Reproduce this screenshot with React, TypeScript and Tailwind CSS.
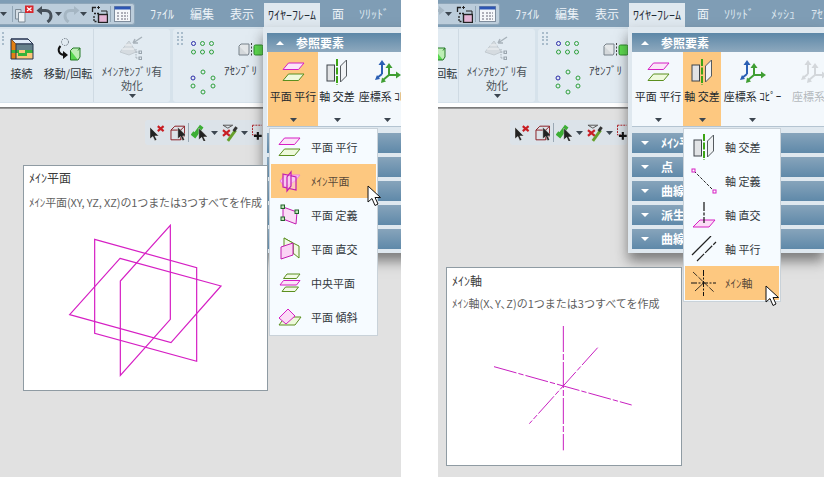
import type { ReactNode } from "react";

const pink = "#d61fc4";
const green = "#5b8f1f";

function ArrowDown({ color = "#3c4650" }: { color?: string }) {
  return (
    <svg width="7" height="4" viewBox="0 0 7 4">
      <path d="M0 0H7L3.5 4Z" fill={color} />
    </svg>
  );
}

function CopyIcon() {
  return (
    <svg width="19" height="18" viewBox="0 0 19 18">
      <path d="M0.5 4.5H6V14H0.5Z" fill="#d6dee5" stroke="#7d8b96" />
      <path d="M3.5 7.5H10V17H3.5Z" fill="#eef2f5" stroke="#7d8b96" />
      <rect x="10" y="0.5" width="8.5" height="7.5" fill="#d8262c" />
      <path d="M12 2.5L16.5 6M16.5 2.5L12 6" stroke="#fff" strokeWidth="1.3" />
    </svg>
  );
}

function UndoIcon({ color }: { color: string }) {
  return (
    <svg width="17" height="17" viewBox="0 0 17 17">
      <path d="M4 4.5H9.5C13 4.5 15 7 15 10C15 12.5 13.5 14.5 11.5 16" fill="none" stroke={color} strokeWidth="3" />
      <path d="M6 0V9L0.5 4.5Z" fill={color} />
    </svg>
  );
}

function TreeToolIcon() {
  return (
    <svg width="17" height="17" viewBox="0 0 17 17">
      <path d="M5 1.5H1.5V6" fill="none" stroke="#222" strokeWidth="1.3" />
      <path d="M3 7.5H8M3 10V15.5H6" fill="none" stroke="#222" strokeWidth="1.3" strokeDasharray="2 1" />
      <path d="M9 1.5H6.5L8 0M6.5 1.5L8 3" fill="none" stroke="#222" />
      <rect x="7.5" y="8.5" width="9" height="8" fill="#e4b4d4" stroke="#222" strokeWidth="1.4" />
      <path d="M10 5H16V8" fill="none" stroke="#222" />
    </svg>
  );
}

function TableIcon() {
  return (
    <svg width="17" height="16" viewBox="0 0 17 16">
      <rect x="0.5" y="0.5" width="16" height="15" fill="#f5f7fa" stroke="#7e8c9c" />
      <rect x="0.5" y="0.5" width="16" height="3" fill="#2d56b4" />
      <path d="M3 7H5M7 7H14M3 10H5M7 10H14M3 13H5M7 13H14" stroke="#667" strokeDasharray="2 1" />
    </svg>
  );
}

function ConnectIcon() {
  return (
    <svg width="24" height="22" viewBox="0 0 24 22">
      <path d="M1 1H18L23 6V21H1Z" fill="#fac677" />
      <path d="M1 1H18L23 6H6Z" fill="#dfe9f7" stroke="#1e2c50" />
      <path d="M1 1L6 6V21H1Z" fill="#e37f12" />
      <path d="M6 6H23V12H6Z" fill="#66808c" />
      <path d="M1 12H9V15H15V12H23L23 15H17V18H8V15H1Z" fill="#35b33a" />
      <path d="M1 1H18L23 6V21H1ZM6 6V21M6 6H23" fill="none" stroke="#26344e" />
    </svg>
  );
}

function MoveRotateIcon() {
  return (
    <svg width="26" height="23" viewBox="0 0 26 23">
      <circle cx="10" cy="4" r="3.5" fill="none" stroke="#6c7680" strokeDasharray="1.5 1" />
      <path d="M5.5 8C2.5 11 3 16 9 17" fill="none" stroke="#111" strokeWidth="2" />
      <path d="M8 13V21L13 17Z" fill="#111" />
      <path d="M15.5 12.5H23V22H15.5Z" fill="#58d84f" stroke="#257a26" />
      <path d="M15.5 12.5L18 10H25V19L23 22M23 12.5L25 10" fill="#bdeeb5" stroke="#257a26" />
    </svg>
  );
}

function AssemblyDisabledIcon() {
  return (
    <svg width="26" height="26" viewBox="0 0 26 26">
      <path d="M1 16L10 5L17 16L10 19Z" fill="#d5dbe0" stroke="#c3cbd1" />
      <path d="M3 13H15M6 9H13" stroke="#f2f4f6" />
      <path d="M14 7L23 1M14 7L19 7M14 7L16 3" fill="none" stroke="#a8b2ba" strokeWidth="1.4" />
      <path d="M17 13V22M17 16H21M17 22H21" fill="none" stroke="#a8b2ba" strokeDasharray="1.5 1" />
      <rect x="20" y="15" width="2.5" height="2.5" fill="none" stroke="#9aa5ae" />
      <rect x="20" y="21" width="2.5" height="2.5" fill="none" stroke="#9aa5ae" />
    </svg>
  );
}

function PointGridIcon() {
  const cols = [2.5, 11.5, 20.5];
  return (
    <svg width="24" height="14" viewBox="0 0 24 14">
      {cols.map((x, i) => (
        <circle key={x} cx={x} cy="2.5" r="2" fill="none" stroke={i === 0 ? "#2b2ba8" : "#2fa03c"} />
      ))}
      {cols.map((x) => (
        <circle key={x} cx={x} cy="11" r="2" fill="none" stroke="#2fa03c" />
      ))}
    </svg>
  );
}

function PointRingIcon() {
  return (
    <svg width="26" height="26" viewBox="0 0 26 26" fill="none" stroke="#2fa03c">
      <circle cx="13" cy="3" r="2" />
      <circle cx="23" cy="9" r="2" />
      <circle cx="23" cy="17" r="2" />
      <circle cx="13" cy="23" r="2" />
      <circle cx="3" cy="17" r="2" />
      <circle cx="3" cy="9" r="2" stroke="#2b2ba8" />
    </svg>
  );
}

function AssemblyCutIcon() {
  return (
    <svg width="26" height="14" viewBox="0 0 26 14">
      <path d="M1 3H10V12H1Z" fill="#d4d8db" stroke="#77818a" />
      <path d="M1 3L3 1H11V10L10 12" fill="#e4e7e9" stroke="#77818a" />
      <path d="M13.5 0V14" stroke="#444" strokeDasharray="2 1.5" />
      <rect x="16" y="2" width="9" height="10" rx="1.5" fill="#5cdc4e" stroke="#2d8a2a" />
    </svg>
  );
}

function PlaneParallelIcon() {
  return (
    <svg width="23" height="20" viewBox="0 0 23 20">
      <path d="M1 7.5L6.5 1H22L16.5 7.5Z" fill="#fbe4f8" stroke={pink} />
      <path d="M1 18.5L6.5 12H22L16.5 18.5Z" fill="#eef9dc" stroke={green} />
    </svg>
  );
}

function AxisCrossIcon() {
  return (
    <svg width="22" height="26" viewBox="0 0 22 26">
      <rect x="1" y="6" width="7.5" height="16" fill="#e1e3e5" stroke="#3e444a" />
      <path d="M14.5 7L20.5 1V17L14.5 23Z" fill="#f0f3f5" stroke="#555b60" />
      <path d="M11 0V26" stroke="#3da414" strokeWidth="2" strokeDasharray="7 1.5" />
    </svg>
  );
}

function CoordIcon({ disabled = false }: { disabled?: boolean }) {
  const blue = disabled ? "#d3d7db" : "#2a5fb4";
  const grn = disabled ? "#d3d7db" : "#3f9e32";
  return (
    <svg width="26" height="24" viewBox="0 0 26 24" fill="none" strokeWidth="2">
      <path d="M7 14V3" stroke={blue} />
      <path d="M7 0L3.5 5H10.5Z" fill={blue} />
      <path d="M7 14L2 18" stroke={blue} />
      <path d="M0 20L2 15L5 19Z" fill={blue} />
      <path d="M14 5V15" stroke={grn} />
      <path d="M14 3L10.5 8H17.5Z" fill={grn} />
      <path d="M14 15H22" stroke={grn} />
      <path d="M26 15L21 11.5V18.5Z" fill={grn} />
      <path d="M14 15L8 20" stroke={grn} />
      <path d="M6 23L7 17.5L11 21.5Z" fill={grn} />
    </svg>
  );
}

function MainPlaneIcon() {
  return (
    <svg width="22" height="24" viewBox="0 0 22 24" fill="#f9d0f2" stroke="#c21bb0">
      <path d="M1 12L6 6H21L16 12L6 18Z" fill="#f7c6ef" stroke="#ef7ee0" />
      <path d="M4 5L17 8V21L4 18Z" fillOpacity="0.5" strokeWidth="1.2" />
      <path d="M12 3V17L8 22V8Z" fillOpacity="0.5" strokeWidth="1.2" />
    </svg>
  );
}

function PlaneDefineIcon() {
  return (
    <svg width="22" height="22" viewBox="0 0 22 22">
      <path d="M4 3L18 8L17 20L4 15Z" fill="#fbdcf6" stroke="#c21bb0" />
      <rect x="2" y="1" width="3.5" height="3.5" fill="#bfe6b8" stroke="#23632a" />
      <rect x="16" y="6" width="3.5" height="3.5" fill="#bfe6b8" stroke="#23632a" />
      <rect x="2" y="13" width="3.5" height="3.5" fill="#bfe6b8" stroke="#23632a" />
    </svg>
  );
}

function PlaneOrthoIcon() {
  return (
    <svg width="20" height="24" viewBox="0 0 20 24">
      <path d="M4 1L13 6V16L19 21V9L13 6" fill="#f2fae6" stroke={green} />
      <path d="M4 1V12L13 16V6Z" fill="#f2fae6" stroke={green} />
      <path d="M1 10L13 6V18L1 22Z" fill="#fbd4f5" stroke="#c21bb0" />
    </svg>
  );
}

function MidPlaneIcon() {
  return (
    <svg width="22" height="20" viewBox="0 0 22 20" fill="none">
      <path d="M4.5 5.5L8 1H21L17.5 5.5Z" fill="#f2fae6" stroke={green} />
      <path d="M1 12L4.5 7.5H21L17.5 12Z" fill="#fbe4f8" stroke={pink} />
      <path d="M3 18.5L6.5 14H19.5L16 18.5Z" fill="#f2fae6" stroke={green} />
    </svg>
  );
}

function PlaneTiltIcon() {
  return (
    <svg width="24" height="18" viewBox="0 0 24 18">
      <path d="M1 17L7 9H23L17 17Z" fill="#eef9dc" stroke={green} />
      <path d="M1 10L10 1L17 8L8 16Z" fill="#fbdcf6" stroke={pink} />
    </svg>
  );
}

function AxisDefineIcon() {
  return (
    <svg width="26" height="26" viewBox="0 0 26 26">
      <path d="M3 3L23 23" stroke="#222" strokeDasharray="3 1.5" />
      <rect x="1" y="1" width="3" height="3" fill="#fff" stroke={pink} />
      <rect x="22" y="22" width="3" height="3" fill="#fff" stroke={pink} />
    </svg>
  );
}

function AxisOrthoIcon() {
  return (
    <svg width="24" height="26" viewBox="0 0 24 26">
      <path d="M1 25L8 18H23L17 25Z" fill="#fbdcf6" stroke={pink} />
      <path d="M12 0V21" stroke="#111" strokeWidth="1.2" strokeDasharray="9 1.5 3 1.5" />
    </svg>
  );
}

function AxisParallelIcon() {
  return (
    <svg width="26" height="26" viewBox="0 0 26 26" stroke="#222" strokeWidth="1.2">
      <path d="M1 19L20 0" />
      <path d="M6 25L25 6" strokeDasharray="10 1.5" />
    </svg>
  );
}

function MainAxisIcon() {
  return (
    <svg width="25" height="26" viewBox="0 0 25 26" stroke="#111" fill="none">
      <path d="M12.5 0V26" strokeDasharray="6 1.5 2 1.5" />
      <path d="M0 13H25" strokeDasharray="6 1.5 2 1.5" />
      <path d="M2 2L23 22" strokeWidth="0.8" strokeDasharray="6 1.5" />
      <path d="M12.5 13L4 21" strokeWidth="0.8" />
    </svg>
  );
}

function Cursor() {
  return (
    <svg width="16" height="22" viewBox="0 0 16 22">
      <path d="M1 1V17L5 13.5L8 20.5L11 19L8 12.5H13.5Z" fill="#fff" stroke="#111" />
    </svg>
  );
}

function SmallArrow({ x = 0, y = 0 }: { x?: number; y?: number }) {
  return <path transform={`translate(${x} ${y})`} d="M0 0V12L3 9.5L5 14L7 13L5 9H9Z" fill="#222" stroke="#fff" strokeWidth="0.4" />;
}

function FloatToolbar() {
  return (
    <div className="absolute left-[145px] top-[120px] flex h-[25px] w-[117px] items-center rounded-[3px] bg-[#dce3e9] pl-[4px]">
      <svg width="16" height="16" viewBox="0 0 16 16">
        <SmallArrow x={1} y={2} />
        <path d="M9 1L15 6M15 1L9 6" stroke="#c81e24" strokeWidth="2.2" />
      </svg>
      <svg className="ml-[5px]" width="16" height="16" viewBox="0 0 16 16" fill="none" stroke="#8a1e24">
        <path d="M1 5L5 1H15V11L11 15H1ZM1 5H11V15M11 5L15 1" />
        <SmallArrow x={8} y={2} />
      </svg>
      <div className="ml-[3px] h-[19px] w-px bg-[#9aa8b4]" />
      <svg className="ml-[2px]" width="16" height="17" viewBox="0 0 16 17">
        <path d="M1 9L4 11.5L11 2" fill="none" stroke="#3cae34" strokeWidth="4.5" />
        <SmallArrow x={8} y={4} />
      </svg>
      <div className="ml-[4px]">
        <ArrowDown />
      </div>
      <svg className="ml-[4px]" width="17" height="18" viewBox="0 0 17 18">
        <path d="M1 1H11L6 4Z" fill="none" stroke="#555" />
        <path d="M1 6L8 12M8 6L1 12" stroke="#c81e24" strokeWidth="2.2" />
        <path d="M6 17L14 6" stroke="#66a02c" strokeWidth="3" />
        <path d="M12 7L15 3" stroke="#333" strokeWidth="3" />
      </svg>
      <div className="ml-[3px]">
        <ArrowDown />
      </div>
      <svg className="ml-[4px]" width="10" height="18" viewBox="0 0 10 18">
        <path d="M0.5 1H10M0.5 1V11H4" fill="none" stroke="#b01e24" strokeDasharray="2 1" />
        <path d="M6 8V16M2 12H10" stroke="#111" strokeWidth="2.2" />
      </svg>
    </div>
  );
}

function QuickBar() {
  return (
    <div className="mt-[3px] flex h-[22px] w-[135px] shrink-0 items-center rounded-r-[3px] border border-l-0 border-[#8ea6b9] bg-[#bccddb]">
      <ArrowDown />
      <div className="ml-[5px] h-[16px] w-px bg-[#93a7b7]" />
      <div className="ml-[2px] flex">
        <CopyIcon />
      </div>
      <div className="ml-[2px] flex">
        <UndoIcon color="#46505a" />
      </div>
      <div className="ml-[2px]">
        <ArrowDown />
      </div>
      <div className="ml-[1px] flex -scale-x-100">
        <UndoIcon color="#a5b6c3" />
      </div>
      <div>
        <ArrowDown />
      </div>
      <div className="ml-[4px] flex">
        <TreeToolIcon />
      </div>
      <div className="ml-[2px] h-[16px] w-px bg-[#93a7b7]" />
      <div className="ml-[3px] flex">
        <TableIcon />
      </div>
    </div>
  );
}

function Tabs() {
  return (
    <div className="ml-[15px] flex items-start text-[12px] leading-[27px] text-[#edf3f8]">
      <span className="w-[24px] whitespace-nowrap">ﾌｧｲﾙ</span>
      <span className="ml-[16px] whitespace-nowrap">編集</span>
      <span className="ml-[16px] whitespace-nowrap">表示</span>
      <span className="ml-[10px] mt-[3px] h-[24px] whitespace-nowrap bg-[#dfe8ef] px-[4px] leading-[24px] text-[#1e2a34]">ﾜｲﾔｰﾌﾚｰﾑ</span>
      <span className="ml-[12px] whitespace-nowrap">面</span>
      <span className="ml-[15px] whitespace-nowrap text-[#dde7ef]">ｿﾘｯﾄﾞ</span>
      <span className="ml-[17px] whitespace-nowrap text-[#dde7ef]">ﾒｯｼｭ</span>
      <span className="ml-[16px] whitespace-nowrap text-[#dde7ef]">ｱｾﾝ</span>
    </div>
  );
}

function Grip() {
  return (
    <div className="grid h-[13px] w-[6px] grid-cols-2 gap-[1px]">
      {[0, 1, 2, 3, 4, 5, 6, 7].map((i) => (
        <div key={i} className="h-[2px] w-[2px] bg-[#a9bccb]" />
      ))}
    </div>
  );
}

function RibbonButton({ icon, label, width }: { icon: ReactNode; label: string; width: string }) {
  return (
    <div className={`flex flex-col items-center pt-[8px] text-[11px] text-[#2d3338] ${width}`}>
      <div className="flex h-[24px] items-center">{icon}</div>
      <div className="mt-[4px] whitespace-nowrap leading-[16px]">{label}</div>
    </div>
  );
}

function Ribbon() {
  return (
    <div className="flex h-[76px] gap-[3px] bg-[#d6e2eb] pt-[2px]">
      <div className="relative flex h-[73px] w-[170px] rounded-r-[3px] bg-[#e2ebf2]">
        <div className="absolute left-[-2px] top-[3px]">
          <Grip />
        </div>
        <RibbonButton icon={<ConnectIcon />} label="接続" width="w-[43px]" />
        <RibbonButton icon={<MoveRotateIcon />} label="移動/回転" width="w-[50px]" />
        <div className="w-px bg-[#cfdae3]" />
        <div className="flex w-[76px] flex-col items-center pt-[7px] text-[11px] leading-[14px] text-[#4a5258]">
          <AssemblyDisabledIcon />
          <div className="mt-[2px] whitespace-nowrap">ﾒｲﾝｱｾﾝﾌﾞﾘ有</div>
          <div>効化</div>
          <div className="mt-[2px]">
            <ArrowDown />
          </div>
        </div>
      </div>
      <div className="flex h-[73px] w-[120px] rounded-[3px] bg-[#e2ebf2] pl-[4px] pt-[3px]">
        <Grip />
        <div className="ml-[7px] flex flex-col items-center pt-[9px]">
          <PointGridIcon />
          <div className="mt-[14px]">
            <PointRingIcon />
          </div>
        </div>
        <div className="ml-[8px] flex flex-col pt-[11px] text-[11px] leading-[16px] text-[#3a4046]">
          <div className="ml-[14px] flex">
            <AssemblyCutIcon />
          </div>
          <div className="mt-[5px] whitespace-nowrap">ｱｾﾝﾌﾞﾘ</div>
        </div>
      </div>
    </div>
  );
}

function PanelButton({
  icon,
  label,
  width,
  active = false,
}: {
  icon: ReactNode;
  label: string;
  width: string;
  active?: boolean;
}) {
  return (
    <div className={`flex h-full shrink-0 flex-col items-center pt-[6px] text-[11px] leading-[16px] text-[#24292e] ${width} ${active ? "bg-[#fdc880]" : ""}`}>
      <div className="flex h-[28px] items-center">{icon}</div>
      <div className="mt-[2px] whitespace-nowrap">{label}</div>
      <div className="mt-auto mb-[4px] flex">
        <ArrowDown />
      </div>
    </div>
  );
}

function SectionRow({ label }: { label: string }) {
  return (
    <div className="flex h-[20px] items-center bg-gradient-to-b from-[#87a4bb] to-[#5f89a9] pl-[9px] text-[12px] font-bold text-white">
      <svg width="8" height="4" viewBox="0 0 8 4">
        <path d="M0 0H8L4 4Z" fill="#fff" />
      </svg>
      <span className="ml-[12px] whitespace-nowrap">{label}</span>
    </div>
  );
}

function RefPanel({ active }: { active: "plane" | "axis" }) {
  return (
    <div className="absolute left-[263px] top-[27px] flex h-[226px] w-[196px] flex-col bg-[#dfe8ef] pl-[4px] pt-[6px] shadow-[0_8px_12px_rgba(40,40,40,0.55)]">
      <div className="flex h-[19px] shrink-0 items-center bg-gradient-to-b from-[#5c87a7] to-[#8ea9be] pl-[9px] text-[12px] font-bold text-white">
        <svg width="8" height="4" viewBox="0 0 8 4">
          <path d="M0 4H8L4 0Z" fill="#fff" />
        </svg>
        <span className="ml-[12px]">参照要素</span>
      </div>
      <div className="flex h-[75px] shrink-0 overflow-hidden border-b border-[#b4c4d1] bg-[#f3f8fc] pl-px">
        <PanelButton icon={<PlaneParallelIcon />} label="平面 平行" width="w-[50px]" active={active === "plane"} />
        <PanelButton icon={<AxisCrossIcon />} label="軸 交差" width="w-[38px]" active={active === "axis"} />
        <PanelButton icon={<CoordIcon />} label="座標系 ｺﾋﾟｰ" width="w-[63px]" />
        <div className="flex h-full w-[60px] shrink-0 flex-col items-center pt-[6px] text-[11px] leading-[16px] text-[#b4b9bd]">
          <div className="flex h-[28px] items-center">
            <CoordIcon disabled />
          </div>
          <div className="mt-[2px] whitespace-nowrap">座標系有</div>
        </div>
      </div>
      <div className="mt-[6px] flex flex-col gap-[4px]">
        <SectionRow label="ﾒｲﾝ平面" />
        <SectionRow label="点" />
        <SectionRow label="曲線" />
        <SectionRow label="派生曲線" />
        <SectionRow label="曲線編集" />
      </div>
    </div>
  );
}

function FlyItem({ icon, label, active = false, tiny = false }: { icon: ReactNode; label: string; active?: boolean; tiny?: boolean }) {
  return (
    <div className={`flex h-[34px] items-center ${active ? "bg-[#fdc880]" : ""}`}>
      <div className="flex w-[37px] shrink-0 justify-center">{icon}</div>
      <div className={`ml-[3px] whitespace-nowrap text-[11px] ${tiny ? "text-[#5a4a38]" : "text-[#33393e]"}`}>{label}</div>
    </div>
  );
}

function Chrome({ panel, children }: { panel: "plane" | "axis"; children: ReactNode }) {
  return (
    <div className="relative flex h-full w-[459px] flex-col">
      <div className="flex h-[27px] bg-[#7f9db5]">
        <QuickBar />
        <Tabs />
      </div>
      <Ribbon />
      <div className="h-[4px] bg-white" />
      <div className="h-[2px] bg-gradient-to-b from-[#6e6e6e] to-[#a8a8a8]" />
      <div className="flex-1 bg-[#e1e1e1]" />
      <FloatToolbar />
      <RefPanel active={panel} />
      {children}
    </div>
  );
}

export default function App() {
  return (
    <div className="flex h-[477px] w-[824px] overflow-hidden bg-white font-['Noto_Sans_CJK_JP','Liberation_Sans',sans-serif]">
      <div className="h-full w-[401px] shrink-0 overflow-hidden">
        <Chrome panel="plane">
          <div className="absolute left-[23px] top-[165px] h-[226px] w-[245px] border border-[#8f9ba3] bg-white pl-[5px] pt-[2px]">
            <div className="text-[12px] leading-[20px] text-[#3a3a3a]">ﾒｲﾝ平面</div>
            <div className="mt-[5px] whitespace-nowrap text-[11px] leading-[18px] tracking-[-0.1px] text-[#5f5f5f]">ﾒｲﾝ平面(XY, YZ, XZ)の1つまたは3つすべてを作成</div>
            <svg className="ml-[26px] mt-[5px]" width="180" height="170" viewBox="0 0 540 510" fill="none" stroke="#d61fc4" strokeWidth="3.6">
              <path d="M119 70L425 155V436L119 352Z" />
              <path d="M195 127L498 210L348 380L44 296Z" />
              <path d="M346 28V310L196 478V195Z" />
            </svg>
          </div>
          <div className="absolute left-[269px] top-[128px] w-[109px] border border-[#c9d2d9] bg-[#f6fbff] p-px">
            <FlyItem icon={<PlaneParallelIcon />} label="平面 平行" />
            <FlyItem icon={<MainPlaneIcon />} label="ﾒｲﾝ平面" active tiny />
            <FlyItem icon={<PlaneDefineIcon />} label="平面 定義" />
            <FlyItem icon={<PlaneOrthoIcon />} label="平面 直交" />
            <FlyItem icon={<MidPlaneIcon />} label="中央平面" />
            <FlyItem icon={<PlaneTiltIcon />} label="平面 傾斜" />
          </div>
          <div className="absolute left-[367px] top-[185px]">
            <Cursor />
          </div>
        </Chrome>
      </div>
      <div className="ml-[37px] h-full w-[386px] shrink-0 overflow-hidden">
        <div className="-ml-[73px] h-full">
          <Chrome panel="axis">
            <div className="absolute left-[81px] top-[267px] h-[199px] w-[236px] border border-[#8f9ba3] bg-white pl-[5px] pt-[3px]">
              <div className="text-[12px] leading-[20px] text-[#3a3a3a]">ﾒｲﾝ軸</div>
              <div className="mt-[3px] whitespace-nowrap text-[11px] leading-[18px] text-[#5f5f5f]">ﾒｲﾝ軸(X､Y､Z)の1つまたは3つすべてを作成</div>
              <svg className="ml-[38px] mt-[13px]" width="150" height="130" viewBox="0 0 450 390" fill="none" stroke="#c81fc0" strokeWidth="3">
                <path d="M220 3V376" strokeDasharray="78 6 18 6" />
                <path d="M12 125L425 240" strokeDasharray="70 6 16 6" />
                <path d="M323 68L118 296" strokeDasharray="70 6 16 6" />
              </svg>
            </div>
            <div className="absolute left-[318px] top-[128px] w-[98px] border border-[#c9d2d9] bg-[#f6fbff] p-px">
              <FlyItem icon={<AxisCrossIcon />} label="軸 交差" />
              <FlyItem icon={<AxisDefineIcon />} label="軸 定義" />
              <FlyItem icon={<AxisOrthoIcon />} label="軸 直交" />
              <FlyItem icon={<AxisParallelIcon />} label="軸 平行" />
              <FlyItem icon={<MainAxisIcon />} label="ﾒｲﾝ軸" active tiny />
            </div>
            <div className="absolute left-[400px] top-[285px]">
              <Cursor />
            </div>
          </Chrome>
        </div>
      </div>
    </div>
  );
}
